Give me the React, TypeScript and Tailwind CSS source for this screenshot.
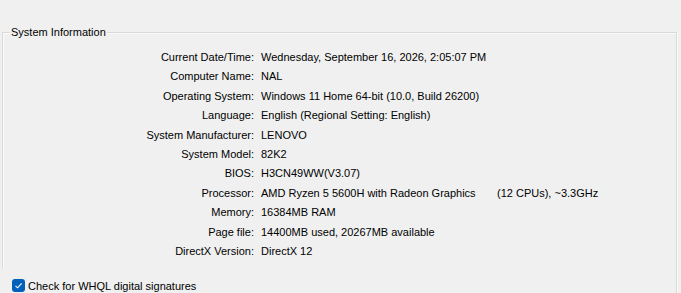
import React from "react";

const rows: [string, React.ReactNode][] = [
  ["Current Date/Time:", "Wednesday, September 16, 2026, 2:05:07 PM"],
  ["Computer Name:", "NAL"],
  ["Operating System:", "Windows 11 Home 64-bit (10.0, Build 26200)"],
  ["Language:", "English (Regional Setting: English)"],
  ["System Manufacturer:", "LENOVO"],
  ["System Model:", "82K2"],
  ["BIOS:", "H3CN49WW(V3.07)"],
  [
    "Processor:",
    <span className="flex">
      <span className="w-[236px] shrink-0">AMD Ryzen 5 5600H with Radeon Graphics</span>
      <span>(12 CPUs), ~3.3GHz</span>
    </span>,
  ],
  ["Memory:", "16384MB RAM"],
  ["Page file:", "14400MB used, 20267MB available"],
  ["DirectX Version:", "DirectX 12"],
];

export default function App() {
  return (
    <div className="w-[681px] h-[293px] overflow-hidden bg-[#f0f0f0] text-black text-[11px] font-['Liberation_Sans',Arial,sans-serif] pt-[32px]">
      <div className="ml-[2px] mr-[4px] h-[261px] border-r border-[#d9d9d9] shadow-[1px_0_0_#fbfbfb]">
        <div className="relative border-l border-t border-[#d9d9d9] pt-[15px] pb-[7px] shadow-[inset_1px_1px_0_#fbfbfb]">
          <span className="absolute -top-[9px] left-[7px] px-[1px] bg-[#f0f0f0] leading-[16px]">
            System Information
          </span>
          <div className="grid grid-cols-[251px_1fr] gap-x-[7px]">
            {rows.map(([label, value], i) => (
              <React.Fragment key={i}>
                <div className="text-right h-[19.4px] leading-[19.4px] whitespace-nowrap">{label}</div>
                <div className="h-[19.4px] leading-[19.4px] whitespace-nowrap">{value}</div>
              </React.Fragment>
            ))}
          </div>
        </div>
        <label className="mt-[8px] ml-[10px] flex items-center gap-[3px] h-[19px]">
          <span className="w-[13px] h-[13px] rounded-[3px] bg-[#005fb8] flex items-center justify-center">
            <svg width="9" height="9" viewBox="0 0 9 9" fill="none">
              <path d="M1.5 4.8 L3.6 6.8 L7.6 2.4" stroke="white" strokeWidth="1.1" />
            </svg>
          </span>
          <span>Check for WHQL digital signatures</span>
        </label>
      </div>
    </div>
  );
}
